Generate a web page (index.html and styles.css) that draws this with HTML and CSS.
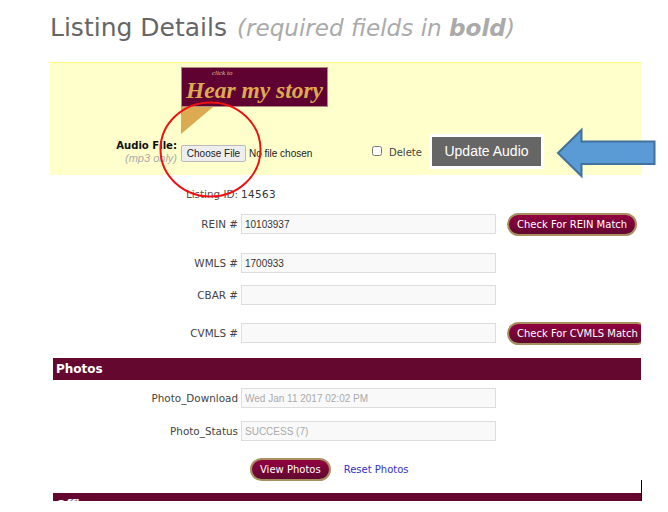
FILE: index.html
```html
<!DOCTYPE html>
<html lang="en">
<head>
    <meta charset="UTF-8">
    <meta name="viewport" content="width=device-width, initial-scale=1.0">
    <title>Listing Details</title>
    <link rel="stylesheet" href="styles.css">
</head>
<body>
    <div class="page">
        <h1>Listing Details <span class="hint">(required fields in <b>bold</b>)</span></h1>

        <div class="audio-panel">
            <div class="banner">
                <span class="banner-small">click to</span>
                <span class="banner-text">Hear my story</span>
                <div class="banner-tail"></div>
            </div>
            <div class="audio-row">
                <div class="audio-label">
                    <b>Audio File:</b>
                    <i>(mp3 only)</i>
                </div>
                <div class="file-input">
                    <button type="button" class="choose-btn">Choose File</button>
                    <span>No file chosen</span>
                </div>
                <label class="delete"><input type="checkbox"> Delete</label>
                <button type="button" class="update-btn">Update Audio</button>
            </div>
        </div>

        <div class="row id-row">
            <label>Listing ID:</label>
            <span class="value">14563</span>
        </div>
        <div class="row first">
            <label>REIN #</label>
            <input type="text" value="10103937">
            <button type="button" class="btn check-btn">Check For REIN Match</button>
        </div>
        <div class="row short">
            <label>WMLS #</label>
            <input type="text" value="1700933">
        </div>
        <div class="row tall">
            <label>CBAR #</label>
            <input type="text">
        </div>
        <div class="row">
            <label>CVMLS #</label>
            <input type="text">
            <button type="button" class="btn check-btn">Check For CVMLS Match</button>
        </div>

        <div class="section-bar">Photos</div>
        <div class="row">
            <label>Photo_Download</label>
            <input type="text" class="readonly" value="Wed Jan 11 2017 02:02 PM" readonly>
        </div>
        <div class="row">
            <label>Photo_Status</label>
            <input type="text" class="readonly" value="SUCCESS (7)" readonly>
        </div>
        <div class="photo-actions">
            <button type="button" class="btn">View Photos</button>
            <a href="#">Reset Photos</a>
        </div>
        <div class="section-bar last">Offices</div>
    </div>

    <!-- annotations drawn over the screenshot -->
    <svg class="annotations" width="668" height="512" viewBox="0 0 668 512">
        <ellipse cx="210.5" cy="149.5" rx="50" ry="47" fill="none" stroke="#ee1111" stroke-width="2"/>
        <path d="M558 153 L581.5 130 V141.5 H654.5 V164 H581.5 V176 Z" fill="#5b9bd5" stroke="#41719c" stroke-width="2"/>
        <path d="M641.5 480 V501" stroke="#000" stroke-width="1"/>
    </svg>
</body>
</html>
```

FILE: styles.css
```css
body {
    margin: 0;
    background-color: #fff;
    font-family: "DejaVu Sans", Verdana, sans-serif;
    font-size: 10.4px;
    color: #333;
}
.page {
    width: 591px;
    height: 501px;
    margin-left: 50px;
    overflow: hidden;
}
h1 {
    margin: 0;
    padding-top: 13px;
    height: 62px;
    box-sizing: border-box;
    font-size: 25px;
    font-weight: normal;
    line-height: 30px;
    color: #666;
    white-space: nowrap;
}
.hint {
    margin-left: 2px;
    font-size: 23.1px;
    font-style: italic;
    color: #aaa;
}
.audio-panel {
    box-sizing: border-box;
    height: 113px;
    padding: 4px 0 0 131px;
    background-color: #ffc;
    border-top: 1px solid #ffff80;
}
.banner {
    position: relative;
    width: 147px;
    height: 40px;
    box-sizing: border-box;
    padding-top: 9px;
    background-color: #5f0232;
    border: 1px solid #b08a80;
    font-family: "Liberation Serif", serif;
    font-style: italic;
    font-weight: bold;
    color: #dcaa50;
    text-align: center;
}
.banner-small {
    position: absolute;
    left: 30px;
    top: 1px;
    font-size: 7px;
    line-height: 8px;
    font-weight: normal;
    color: #d8c0a0;
}
.banner-text {
    display: block;
    font-size: 23.5px;
    line-height: 27px;
    white-space: nowrap;
}
.banner-tail {
    position: absolute;
    left: -1px;
    top: 39px;
    width: 32px;
    height: 27px;
    background-color: #dcaa50;
    clip-path: polygon(0 0, 100% 0, 0 100%);
}
.audio-row {
    display: flex;
    align-items: center;
    height: 35px;
    margin: 27px 0 0 -131px;
}
.audio-label {
    width: 127px;
    margin-right: 4px;
    padding-top: 1px;
    display: flex;
    flex-direction: column;
    line-height: 12px;
    text-align: right;
    color: #111;
}
.audio-label b {
    font-size: 10.1px;
}
.audio-label i {
    font-family: "Liberation Sans", Arial, sans-serif;
    font-size: 11px;
    color: #aaa;
}
.file-input {
    display: flex;
    align-items: center;
    gap: 3px;
    width: 191px;
    padding-top: 3px;
    font-family: "Liberation Sans", Arial, sans-serif;
    font-size: 10px;
    color: #222;
}
.choose-btn {
    width: 65px;
    height: 17px;
    padding: 0;
    background-color: #eee;
    border: 1px solid #bbb;
    border-radius: 2px;
    font-family: "Liberation Sans", Arial, sans-serif;
    font-size: 10px;
    color: #222;
}
.delete {
    display: flex;
    align-items: center;
    gap: 7px;
    width: 57px;
    color: #444;
    font-size: 10px;
    padding-top: 1px;
}
.delete input {
    width: 10px;
    height: 10px;
    margin: 0;
    position: relative;
    top: -1px;
}
.update-btn {
    box-sizing: content-box;
    width: 109px;
    height: 29px;
    padding: 0;
    margin-top: -1px;
    background-color: #666;
    border: 3px solid #fff;
    outline: 0;
    font-family: "Liberation Sans", Arial, sans-serif;
    font-size: 14px;
    color: #fff;
}
.row {
    display: flex;
    align-items: center;
    height: 20px;
    margin-bottom: 13px;
}
.row.first {
    margin-bottom: 19px;
}
.row.short {
    margin-bottom: 12px;
}
.row.tall {
    margin-bottom: 18px;
}
.row label {
    flex-shrink: 0;
    width: 188px;
    margin-right: 3px;
    text-align: right;
    color: #444;
    white-space: nowrap;
}
.row input {
    flex-shrink: 0;
    box-sizing: border-box;
    width: 255px;
    height: 20px;
    padding: 0 3px;
    background-color: #f9f9f9;
    border: 1px solid #ddd;
    font-family: "Liberation Sans", Arial, sans-serif;
    font-size: 10px;
    color: #333;
}
.row input.readonly {
    color: #aaa;
}
.id-row {
    margin: 9px 0 10px;
}
.id-row label {
    color: #555;
}
.value {
    letter-spacing: 0.4px;
}
.btn {
    flex-shrink: 0;
    height: 23px;
    padding: 0 8px;
    background: linear-gradient(#920040, #600830);
    border: 2px solid #a89060;
    border-radius: 12px;
    font-family: "DejaVu Sans", Verdana, sans-serif;
    font-size: 10px;
    color: #fff;
    white-space: nowrap;
}
.check-btn {
    margin-left: 11px;
}
.section-bar {
    height: 22px;
    margin: 15px 0 8px 3px;
    padding-left: 3px;
    background-color: #650830;
    font-weight: bold;
    font-size: 12px;
    line-height: 22px;
    color: #fff;
}
.section-bar.last {
    margin: 12px 0 0 3px;
    line-height: 25px;
}
.photo-actions {
    display: flex;
    align-items: center;
    height: 23px;
    margin-top: 17px;
    padding-left: 200px;
    gap: 13px;
}
.photo-actions a {
    font-size: 10px;
    color: #33c;
    text-decoration: none;
}
.annotations {
    position: absolute;
    left: 0;
    top: 0;
    pointer-events: none;
}
```
